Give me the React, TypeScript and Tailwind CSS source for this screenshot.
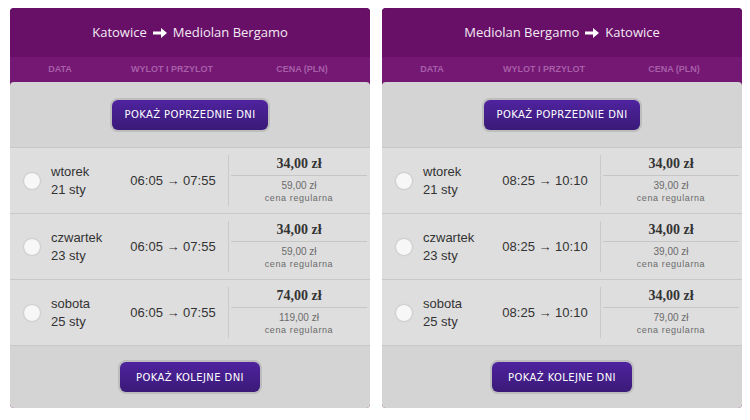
import React from "react";

type Flight = { day: string; date: string; dep: string; arr: string; price: string; regular: string };

const panels: { from: string; to: string; flights: Flight[] }[] = [
  {
    from: "Katowice",
    to: "Mediolan Bergamo",
    flights: [
      { day: "wtorek", date: "21 sty", dep: "06:05", arr: "07:55", price: "34,00 zł", regular: "59,00 zł" },
      { day: "czwartek", date: "23 sty", dep: "06:05", arr: "07:55", price: "34,00 zł", regular: "59,00 zł" },
      { day: "sobota", date: "25 sty", dep: "06:05", arr: "07:55", price: "74,00 zł", regular: "119,00 zł" },
    ],
  },
  {
    from: "Mediolan Bergamo",
    to: "Katowice",
    flights: [
      { day: "wtorek", date: "21 sty", dep: "08:25", arr: "10:10", price: "34,00 zł", regular: "39,00 zł" },
      { day: "czwartek", date: "23 sty", dep: "08:25", arr: "10:10", price: "34,00 zł", regular: "39,00 zł" },
      { day: "sobota", date: "25 sty", dep: "08:25", arr: "10:10", price: "34,00 zł", regular: "79,00 zł" },
    ],
  },
];

function Arrow() {
  return (
    <svg width="16" height="12" viewBox="0 0 16 12" className="mx-[5px] inline-block">
      <path d="M1 4.5h8V1l6 5-6 5V7.5H1z" fill="#fff" />
    </svg>
  );
}

function PurpleButton({ label, width }: { label: string; width: string }) {
  return (
    <div className="rounded-[8px] bg-[#bdbdbd] p-[2px]">
      <button
        className={`${width} h-[30px] rounded-[6px] bg-gradient-to-b from-[#4f239f] to-[#3a1a78] font-['DejaVu_Sans',sans-serif] text-[10px] tracking-[0.4px] text-white`}
      >
        {label}
      </button>
    </div>
  );
}

function Row({ f }: { f: Flight }) {
  return (
    <div className="flex h-[66px] border-t border-[#c8c8c8] bg-[#dedede]">
      <div className="flex w-[100px] items-center pl-[14px]">
        <div className="h-[16px] w-[16px] rounded-full bg-[#f7f7f7] shadow-[0_0_2px_rgba(0,0,0,0.25)]" />
        <div className="ml-[11px] text-[13px] leading-[18px] text-[#333]">
          <div>{f.day}</div>
          <div>{f.date}</div>
        </div>
      </div>
      <div className="flex w-[118px] items-center justify-center pl-[8px] text-[13px] text-[#333]">
        {f.dep} → {f.arr}
      </div>
      <div className="my-[7px] w-px bg-[#cacaca]" />
      <div className="flex flex-1 flex-col items-center pr-[3px] pl-[2px]">
        <div className="flex h-[28px] w-full items-center justify-center border-b border-[#c6c6c6] pt-[4px] font-['Liberation_Serif',serif] text-[14px] font-bold text-[#333]">
          {f.price}
        </div>
        <div className="mt-[3px] text-[10px] leading-[13px] text-[#6a6a6a]">{f.regular}</div>
        <div className="text-[9px] leading-[13px] tracking-[0.6px] text-[#6a6a6a]">cena regularna</div>
      </div>
    </div>
  );
}

function Panel({ p }: { p: (typeof panels)[number] }) {
  return (
    <div className="w-[360px] overflow-hidden rounded-[4px] bg-[#741874]">
      <div className="flex h-[49px] items-center justify-center bg-[#680f68] font-['Open_Sans',sans-serif] text-[13px] text-[#f4eaf4]">
        {p.from}
        <Arrow />
        {p.to}
      </div>
      <div className="flex h-[25px] items-center font-['Liberation_Sans',sans-serif] text-[9px] font-bold text-[#a85ea8]">
        <div className="w-[100px] text-center">DATA</div>
        <div className="w-[124px] text-center">WYLOT I PRZYLOT</div>
        <div className="flex-1 text-center">CENA (PLN)</div>
      </div>
      <div className="rounded-t-[4px] bg-[#d4d4d4]">
        <div className="flex h-[65px] items-center justify-center">
          <PurpleButton label="POKAŻ POPRZEDNIE DNI" width="w-[156px]" />
        </div>
        {p.flights.map((f, i) => (
          <Row key={i} f={f} />
        ))}
        <div className="flex h-[63px] items-center justify-center border-t border-[#c8c8c8]">
          <PurpleButton label="POKAŻ KOLEJNE DNI" width="w-[140px]" />
        </div>
      </div>
    </div>
  );
}

export default function App() {
  return (
    <div className="h-[420px] w-[750px] bg-white pt-[8px] pl-[10px] font-['Liberation_Sans',Arial,sans-serif]">
      <div className="flex gap-[12px]">
        {panels.map((p, i) => (
          <Panel key={i} p={p} />
        ))}
      </div>
    </div>
  );
}
